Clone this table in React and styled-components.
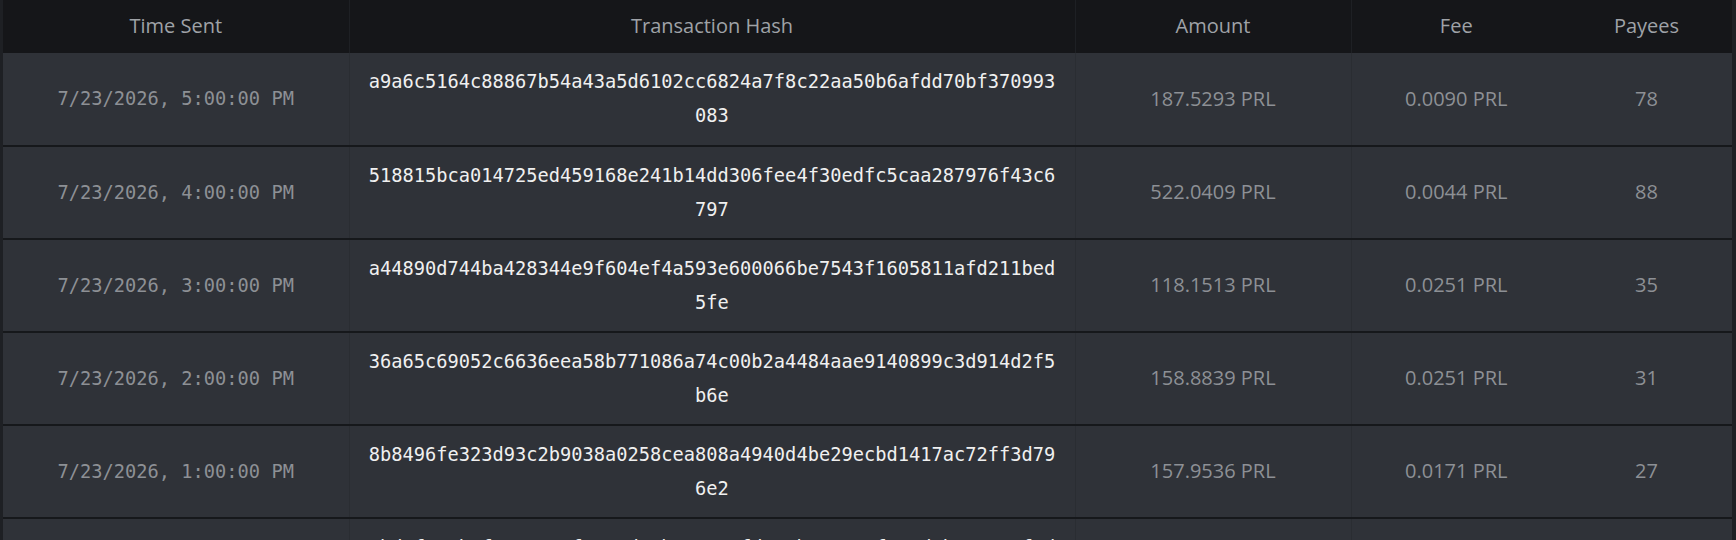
import React from "react";
import styled, { createGlobalStyle } from "styled-components";

const GlobalStyle = createGlobalStyle`
  html, body {
    margin: 0;
    padding: 0;
    background: #1e2024;
  }
  body {
    font-family: "Open Sans", "Lato", sans-serif;
  }
`;

const Wrapper = styled.div`
  padding: 0 4px 0 3px;
`;

const Table = styled.table`
  width: 100%;
  border-collapse: collapse;
  table-layout: fixed;
`;

const HeadRow = styled.tr`
  background: #151619;
`;

const HeadCell = styled.th`
  height: 53px;
  padding: 0 0 2px;
  box-sizing: border-box;
  font-family: "Open Sans", sans-serif;
  font-size: 20px;
  font-weight: 400;
  color: #9fa2a7;
  text-align: center;
  vertical-align: middle;
  border-right: ${(p) => (p.$divider ? "1px solid #1e2024" : "none")};
`;

const Row = styled.tr`
  background: #2f3238;
  border-bottom: 2px solid #16181b;
`;

const Cell = styled.td`
  height: 93px;
  padding: ${(p) => (p.$mono ? "0 18px" : "0 18px 2px")};
  box-sizing: border-box;
  text-align: center;
  vertical-align: middle;
  font-family: ${(p) =>
    p.$mono ? '"DejaVu Sans Mono", monospace' : '"Open Sans", sans-serif'};
  font-size: ${(p) => (p.$mono ? "18.7px" : "20px")};
  line-height: ${(p) => (p.$mono ? "34px" : "normal")};
  color: ${(p) => (p.$bright ? "#f0f0f0" : "#8d9095")};
  word-break: break-all;
  border-right: ${(p) => (p.$divider ? "1px solid #2a2d32" : "none")};
`;

const columns = [
  { label: "Time Sent", width: 346, divider: true },
  { label: "Transaction Hash", width: 726, divider: true },
  { label: "Amount", width: 276, divider: true },
  { label: "Fee", width: 210, divider: false },
  { label: "Payees", width: 171, divider: false },
];

const rows = [
  {
    time: "7/23/2026, 5:00:00 PM",
    hash: "a9a6c5164c88867b54a43a5d6102cc6824a7f8c22aa50b6afdd70bf370993083",
    amount: "187.5293 PRL",
    fee: "0.0090 PRL",
    payees: 78,
  },
  {
    time: "7/23/2026, 4:00:00 PM",
    hash: "518815bca014725ed459168e241b14dd306fee4f30edfc5caa287976f43c6797",
    amount: "522.0409 PRL",
    fee: "0.0044 PRL",
    payees: 88,
  },
  {
    time: "7/23/2026, 3:00:00 PM",
    hash: "a44890d744ba428344e9f604ef4a593e600066be7543f1605811afd211bed5fe",
    amount: "118.1513 PRL",
    fee: "0.0251 PRL",
    payees: 35,
  },
  {
    time: "7/23/2026, 2:00:00 PM",
    hash: "36a65c69052c6636eea58b771086a74c00b2a4484aae9140899c3d914d2f5b6e",
    amount: "158.8839 PRL",
    fee: "0.0251 PRL",
    payees: 31,
  },
  {
    time: "7/23/2026, 1:00:00 PM",
    hash: "8b8496fe323d93c2b9038a0258cea808a4940d4be29ecbd1417ac72ff3d796e2",
    amount: "157.9536 PRL",
    fee: "0.0171 PRL",
    payees: 27,
  },
  {
    time: "7/23/2026, 12:00:00 PM",
    hash: "6bd4f8a1b3fe47c0a9f2e85d1cb7a3406fd2e9b8c1a75f3e4d0b6a92c8f1de73",
    amount: "204.3318 PRL",
    fee: "0.0132 PRL",
    payees: 42,
  },
];

export default function App() {
  return (
    <>
      <GlobalStyle />
      <Wrapper>
        <Table>
          <colgroup>
            {columns.map((c) => (
              <col key={c.label} style={{ width: c.width }} />
            ))}
          </colgroup>
          <thead>
            <HeadRow>
              {columns.map((c) => (
                <HeadCell key={c.label} $divider={c.divider}>
                  {c.label}
                </HeadCell>
              ))}
            </HeadRow>
          </thead>
          <tbody>
            {rows.map((r) => (
              <Row key={r.hash}>
                <Cell $mono $divider>
                  {r.time}
                </Cell>
                <Cell $mono $bright $divider>
                  {r.hash}
                </Cell>
                <Cell $divider>{r.amount}</Cell>
                <Cell>{r.fee}</Cell>
                <Cell>{r.payees}</Cell>
              </Row>
            ))}
          </tbody>
        </Table>
      </Wrapper>
    </>
  );
}
